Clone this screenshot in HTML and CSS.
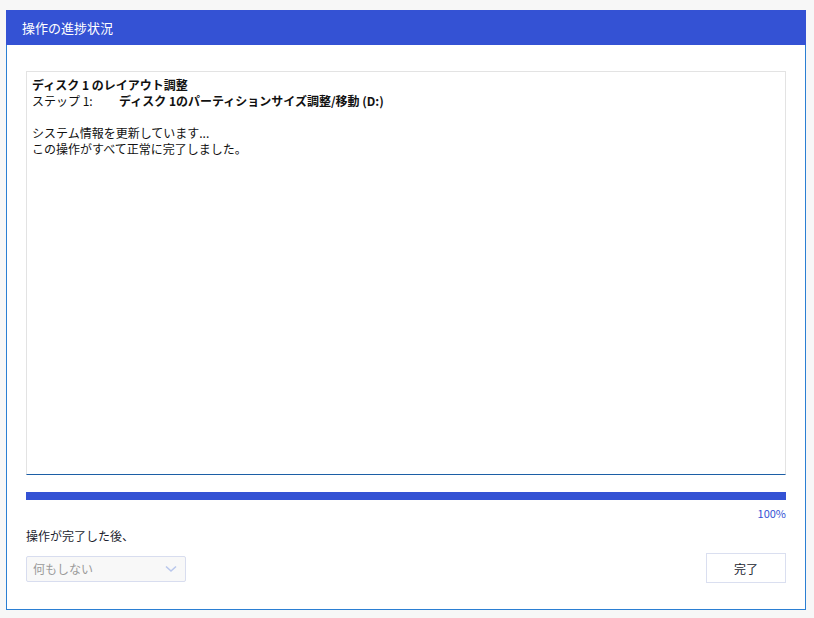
FILE: index.html
```html
<!DOCTYPE html>
<html>
<head>
    <title>操作の進捗状況</title>
    <link rel="stylesheet" href="styles.css">
</head>
<body>
    <div class="window">
        <div class="title-bar">操作の進捗状況</div>
        <div class="content">
            <div class="log">
                <p class="log-line bold">ディスク 1 のレイアウト調整</p>
                <p class="log-line"><span class="step-label">ステップ 1:</span><span class="bold">ディスク 1のパーティションサイズ調整/移動 (D:)</span></p>
                <p class="log-line">&nbsp;</p>
                <p class="log-line">システム情報を更新しています...</p>
                <p class="log-line">この操作がすべて正常に完了しました。</p>
            </div>

            <div class="progress">
                <div class="progress-fill" style="width: 100%"></div>
            </div>
            <div class="percent">100%</div>

            <p class="after-label">操作が完了した後、</p>

            <div class="bottom-row">
                <div class="select">
                    <span>何もしない</span>
                    <svg class="chevron" width="12" height="8" viewBox="0 0 12 8">
                        <path d="M1 1.5 L6 6 L11 1.5" fill="none" stroke="#b9c7ec" stroke-width="1.6"/>
                    </svg>
                </div>
                <button class="done-button">完了</button>
            </div>
        </div>
    </div>
</body>
</html>
```

FILE: styles.css
```css
body {
    margin: 0;
    padding: 10px 0 0 6px;
    background: #f7f7f7;
    font-family: "Noto Sans CJK JP", "DejaVu Sans", sans-serif;
    font-size: 12px;
    color: #1a1d2e;
}

.window {
    width: 800px;
    background: #fff;
}

.title-bar {
    height: 35px;
    line-height: 35px;
    padding-left: 16px;
    background: #3452d4;
    color: #fff;
    font-size: 13px;
}

.content {
    border: 1px solid #2b7fd3;
    border-top: none;
    padding: 26px 19px 26px 19px;
}

.log {
    height: 397px;
    padding: 5px 5px 0 5px;
    border: 1px solid #e3e3e3;
    border-bottom-color: #1c5ea6;
    color: #111;
}

.log-line {
    margin: 0;
    line-height: 16px;
    white-space: nowrap;
}

.bold {
    font-weight: bold;
}

.step-label {
    display: inline-block;
    width: 87px;
}

.progress {
    margin-top: 17px;
    height: 8px;
    background: #e6e9f5;
}

.progress-fill {
    height: 100%;
    background: #3452d4;
}

.percent {
    margin-top: 6px;
    line-height: 14px;
    text-align: right;
    font-size: 11px;
    color: #3452d4;
}

.after-label {
    margin: 8px 0 0 0;
    line-height: 16px;
}

.bottom-row {
    margin-top: 9px;
    display: flex;
    justify-content: space-between;
    align-items: center;
}

.select {
    width: 144px;
    height: 24px;
    margin-top: 1px;
    padding: 0 8px 0 6px;
    display: flex;
    align-items: center;
    justify-content: space-between;
    background: #f8f8f8;
    border: 1px solid #d8ddef;
    border-radius: 2px;
    color: #9a9a9a;
}

.chevron {
    margin-top: 1px;
}

.done-button {
    width: 80px;
    height: 30px;
    background: #fff;
    border: 1px solid #dadff0;
    font-family: inherit;
    font-size: 12px;
    color: #1a1d2e;
    padding: 0;
}
```
